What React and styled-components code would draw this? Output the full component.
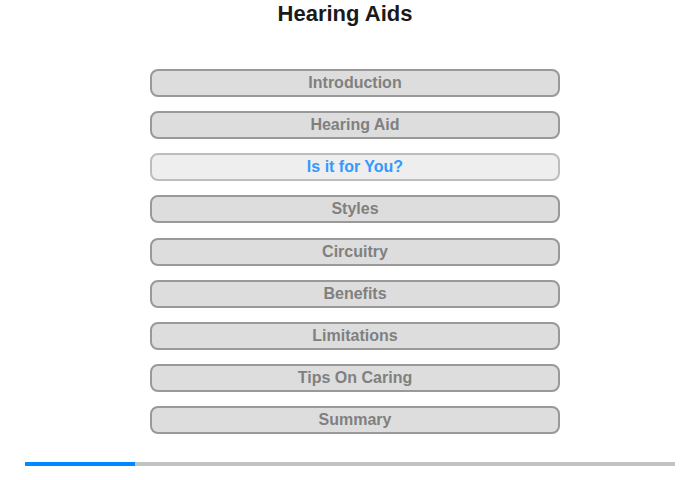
import React from 'react';
import styled, { createGlobalStyle } from 'styled-components';

const GlobalStyle = createGlobalStyle`
  html, body {
    margin: 0;
    padding: 0;
    background: #fff;
    font-family: 'Liberation Sans', Arial, sans-serif;
  }
`;

const chapters = [
  'Introduction',
  'Hearing Aid',
  'Is it for You?',
  'Styles',
  'Circuitry',
  'Benefits',
  'Limitations',
  'Tips On Caring',
  'Summary',
];

const Page = styled.div`
  width: 700px;
  height: 480px;
  display: flex;
  flex-direction: column;
`;

const Title = styled.h1`
  margin: 0;
  padding-right: 10px;
  font-size: 22px;
  line-height: 27px;
  font-weight: 700;
  color: #1a1a1a;
  text-align: center;
`;

const Menu = styled.nav`
  display: flex;
  flex-direction: column;
  gap: 14.125px;
  margin: 42px 0 0 150px;
  width: 410px;
`;

const ChapterButton = styled.div`
  box-sizing: border-box;
  height: 28px;
  border: 2px solid ${(p) => (p.active ? '#bdbdbd' : '#999')};
  border-radius: 8px;
  background: ${(p) => (p.active ? '#eeeeee' : '#dddddd')};
  color: ${(p) => (p.active ? '#3399ff' : '#808080')};
  font-size: 16px;
  font-weight: 700;
  display: flex;
  align-items: center;
  justify-content: center;
  cursor: pointer;
`;

const Progress = styled.div`
  margin: 28px 0 0 25px;
  width: 650px;
  height: 4px;
  background: #c2c2c2;
  display: flex;
`;

const ProgressFill = styled.div`
  height: 100%;
  background: #0088ff;
`;

export default function App() {
  const current = 2;
  return (
    <Page>
      <GlobalStyle />
      <Title>Hearing Aids</Title>
      <Menu>
        {chapters.map((c, i) => (
          <ChapterButton key={c} active={i === current}>
            {c}
          </ChapterButton>
        ))}
      </Menu>
      <Progress>
        <ProgressFill style={{ width: `${(110 / 650) * 100}%` }} />
      </Progress>
    </Page>
  );
}
